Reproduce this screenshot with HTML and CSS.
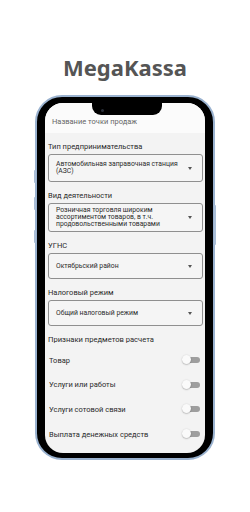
FILE: index.html
```html
<!DOCTYPE html>
<html lang="ru">
<head>
<meta charset="utf-8">
<title>MegaKassa</title>
<link rel="stylesheet" href="styles.css">
</head>
<body>
<h1 class="title">MegaKassa</h1>
<div class="phone">
  <span class="btn btn-l1"></span>
  <span class="btn btn-l2"></span>
  <span class="btn btn-l3"></span>
  <span class="btn btn-r1"></span>
  <div class="screen">
    <div class="notch"><span class="cam"></span></div>
    <div class="name-field">Название точки продаж</div>
    <div class="form">
      <div class="label">Тип предпринимательства</div>
      <div class="select tall">
        <div class="select-text">Автомобильная заправочная станция<br>(АЗС)</div>
        <span class="caret"></span>
      </div>
      <div class="label">Вид деятельности</div>
      <div class="select tall">
        <div class="select-text">Розничная торговля широким<br>ассортиментом товаров, в т.ч.<br>продовольственными товарами</div>
        <span class="caret"></span>
      </div>
      <div class="label">УГНС</div>
      <div class="select">
        <div class="select-text">Октябрьский район</div>
        <span class="caret"></span>
      </div>
      <div class="label">Налоговый режим</div>
      <div class="select">
        <div class="select-text">Общий налоговый режим</div>
        <span class="caret"></span>
      </div>
      <div class="section">Признаки предметов расчета</div>
      <div class="rows">
        <div class="row"><span>Товар</span><span class="toggle"></span></div>
        <div class="row"><span>Услуги или работы</span><span class="toggle"></span></div>
        <div class="row"><span>Услуги сотовой связи</span><span class="toggle"></span></div>
        <div class="row"><span>Выплата денежных средств</span><span class="toggle"></span></div>
      </div>
    </div>
  </div>
</div>
</body>
</html>
```

FILE: styles.css
```css
* { box-sizing: border-box; }
html, body { margin: 0; padding: 0; }
body {
  width: 250px;
  height: 512px;
  background: #ffffff;
  overflow: hidden;
}
.title {
  margin: 0;
  padding-top: 52px;
  font-family: "Noto Sans", sans-serif;
  font-weight: 700;
  font-size: 22px;
  line-height: 30px;
  color: #555555;
  text-align: center;
}
.phone {
  position: relative;
  width: 180px;
  margin: 13px 0 0 35px;
  padding: 6px 8px 5px 8px;
  border: 2px solid #9ab2cf;
  border-radius: 27px;
  background: #000000;
}
.btn {
  position: absolute;
  width: 2px;
  background: #a9bdd6;
  border-radius: 1px;
}
.btn-l1 { left: -3px; top: 73px; height: 13px; }
.btn-l2 { left: -3px; top: 100px; height: 13px; }
.btn-l3 { left: -3px; top: 133px; height: 13px; }
.btn-r1 { right: -3px; top: 108px; height: 40px; }
.screen {
  position: relative;
  height: 350px;
  background: #f3f3f3;
  border-radius: 18px;
  overflow: hidden;
  font-family: Roboto, "Noto Sans", sans-serif;
  color: #333333;
}
.notch {
  position: absolute;
  top: 0;
  left: 47px;
  width: 70px;
  height: 12px;
  background: #000000;
  border-radius: 0 0 9px 9px;
}
.cam {
  position: absolute;
  left: 9px;
  top: 6px;
  width: 3px;
  height: 3px;
  border-radius: 50%;
  background: #2a2f3a;
}
.name-field {
  height: 30px;
  padding: 14px 0 0 7px;
  background: #fbfbfb;
  font-size: 7.5px;
  line-height: 10px;
  color: #666666;
}
.form {
  padding: 0 2px 0 3px;
}
.label {
  margin-top: 9px;
  font-size: 7.5px;
  line-height: 10px;
  color: #2a2a2a;
}
.select {
  display: flex;
  align-items: center;
  justify-content: space-between;
  min-height: 26px;
  margin-top: 2px;
  padding: 3px 10px 3px 7px;
  border: 1px solid #8f8f8f;
  border-radius: 3px;
  background: #f5f5f5;
}
.select.tall { min-height: 28px; }
.select-text {
  font-size: 6.8px;
  line-height: 7px;
  color: #2b2b2b;
}
.caret {
  flex: none;
  width: 0;
  height: 0;
  border-left: 2.5px solid transparent;
  border-right: 2.5px solid transparent;
  border-top: 3px solid #555555;
}
.section {
  margin-top: 9px;
  font-size: 7.6px;
  line-height: 10px;
  color: #2a2a2a;
}
.rows {
  margin-top: 3px;
}
.row {
  display: flex;
  align-items: center;
  justify-content: space-between;
  height: 24.6px;
  padding: 0 3px 0 1px;
  font-size: 7.5px;
  color: #2a2a2a;
}
.toggle {
  position: relative;
  width: 17px;
  height: 6px;
  border-radius: 3px;
  background: #9e9e9e;
}
.toggle::after {
  content: "";
  position: absolute;
  left: -1px;
  top: -2px;
  width: 9px;
  height: 9px;
  border-radius: 50%;
  background: #fafafa;
  box-shadow: 0 0.5px 1.5px rgba(0,0,0,0.35);
}
```
